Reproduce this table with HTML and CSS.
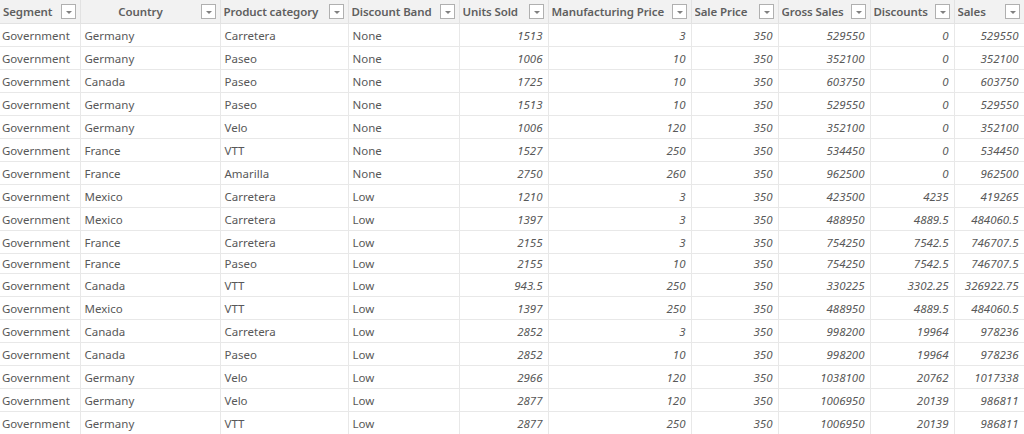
FILE: index.html
```html
<!DOCTYPE html>
<html>
<head>
<meta charset="utf-8">
<link rel="stylesheet" href="styles.css">
</head>
<body>
<table class="grid">
<colgroup>
<col class="c1"><col class="c2"><col class="c3"><col class="c4"><col class="c5"><col class="c6"><col class="c7"><col class="c8"><col class="c9"><col class="c10">
</colgroup>
<thead>
<tr>
<th><div class="hd"><span class="lbl">Segment</span><span class="flt"></span></div></th>
<th><div class="hd"><span class="lbl center">Country</span><span class="flt"></span></div></th>
<th><div class="hd"><span class="lbl">Product category</span><span class="flt"></span></div></th>
<th><div class="hd"><span class="lbl">Discount Band</span><span class="flt"></span></div></th>
<th><div class="hd"><span class="lbl">Units Sold</span><span class="flt"></span></div></th>
<th><div class="hd"><span class="lbl">Manufacturing Price</span><span class="flt"></span></div></th>
<th><div class="hd"><span class="lbl">Sale Price</span><span class="flt"></span></div></th>
<th><div class="hd"><span class="lbl">Gross Sales</span><span class="flt"></span></div></th>
<th><div class="hd"><span class="lbl">Discounts</span><span class="flt"></span></div></th>
<th><div class="hd"><span class="lbl">Sales</span><span class="flt"></span></div></th>
</tr>
</thead>
<tbody>
<tr><td>Government</td><td>Germany</td><td>Carretera</td><td>None</td><td class="n">1513</td><td class="n">3</td><td class="n">350</td><td class="n">529550</td><td class="n">0</td><td class="n">529550</td></tr>
<tr><td>Government</td><td>Germany</td><td>Paseo</td><td>None</td><td class="n">1006</td><td class="n">10</td><td class="n">350</td><td class="n">352100</td><td class="n">0</td><td class="n">352100</td></tr>
<tr><td>Government</td><td>Canada</td><td>Paseo</td><td>None</td><td class="n">1725</td><td class="n">10</td><td class="n">350</td><td class="n">603750</td><td class="n">0</td><td class="n">603750</td></tr>
<tr><td>Government</td><td>Germany</td><td>Paseo</td><td>None</td><td class="n">1513</td><td class="n">10</td><td class="n">350</td><td class="n">529550</td><td class="n">0</td><td class="n">529550</td></tr>
<tr><td>Government</td><td>Germany</td><td>Velo</td><td>None</td><td class="n">1006</td><td class="n">120</td><td class="n">350</td><td class="n">352100</td><td class="n">0</td><td class="n">352100</td></tr>
<tr><td>Government</td><td>France</td><td>VTT</td><td>None</td><td class="n">1527</td><td class="n">250</td><td class="n">350</td><td class="n">534450</td><td class="n">0</td><td class="n">534450</td></tr>
<tr><td>Government</td><td>France</td><td>Amarilla</td><td>None</td><td class="n">2750</td><td class="n">260</td><td class="n">350</td><td class="n">962500</td><td class="n">0</td><td class="n">962500</td></tr>
<tr><td>Government</td><td>Mexico</td><td>Carretera</td><td>Low</td><td class="n">1210</td><td class="n">3</td><td class="n">350</td><td class="n">423500</td><td class="n">4235</td><td class="n">419265</td></tr>
<tr><td>Government</td><td>Mexico</td><td>Carretera</td><td>Low</td><td class="n">1397</td><td class="n">3</td><td class="n">350</td><td class="n">488950</td><td class="n">4889.5</td><td class="n">484060.5</td></tr>
<tr><td>Government</td><td>France</td><td>Carretera</td><td>Low</td><td class="n">2155</td><td class="n">3</td><td class="n">350</td><td class="n">754250</td><td class="n">7542.5</td><td class="n">746707.5</td></tr>
<tr class="short"><td>Government</td><td>France</td><td>Paseo</td><td>Low</td><td class="n">2155</td><td class="n">10</td><td class="n">350</td><td class="n">754250</td><td class="n">7542.5</td><td class="n">746707.5</td></tr>
<tr><td>Government</td><td>Canada</td><td>VTT</td><td>Low</td><td class="n">943.5</td><td class="n">250</td><td class="n">350</td><td class="n">330225</td><td class="n">3302.25</td><td class="n">326922.75</td></tr>
<tr><td>Government</td><td>Mexico</td><td>VTT</td><td>Low</td><td class="n">1397</td><td class="n">250</td><td class="n">350</td><td class="n">488950</td><td class="n">4889.5</td><td class="n">484060.5</td></tr>
<tr><td>Government</td><td>Canada</td><td>Carretera</td><td>Low</td><td class="n">2852</td><td class="n">3</td><td class="n">350</td><td class="n">998200</td><td class="n">19964</td><td class="n">978236</td></tr>
<tr><td>Government</td><td>Canada</td><td>Paseo</td><td>Low</td><td class="n">2852</td><td class="n">10</td><td class="n">350</td><td class="n">998200</td><td class="n">19964</td><td class="n">978236</td></tr>
<tr><td>Government</td><td>Germany</td><td>Velo</td><td>Low</td><td class="n">2966</td><td class="n">120</td><td class="n">350</td><td class="n">1038100</td><td class="n">20762</td><td class="n">1017338</td></tr>
<tr><td>Government</td><td>Germany</td><td>Velo</td><td>Low</td><td class="n">2877</td><td class="n">120</td><td class="n">350</td><td class="n">1006950</td><td class="n">20139</td><td class="n">986811</td></tr>
<tr><td>Government</td><td>Germany</td><td>VTT</td><td>Low</td><td class="n">2877</td><td class="n">250</td><td class="n">350</td><td class="n">1006950</td><td class="n">20139</td><td class="n">986811</td></tr>
</tbody>
</table>
</body>
</html>
```
FILE: styles.css
```css
html, body {
  margin: 0;
  padding: 0;
  background: #ffffff;
  overflow: hidden;
}
.grid {
  border-collapse: collapse;
  table-layout: fixed;
  width: 1024px;
  font-family: "Noto Sans", "Open Sans", sans-serif;
  font-size: 11.5px;
  color: #585858;
}
.c1 { width: 80px; }
.c2 { width: 140px; }
.c3 { width: 128px; }
.c4 { width: 111px; }
.c5 { width: 89px; }
.c6 { width: 143px; }
.c7 { width: 87px; }
.c8 { width: 92px; }
.c9 { width: 84px; }
.c10 { width: 70px; }
.grid th {
  background: #f2f2f2;
  height: 23px;
  padding: 0;
  border-right: 1px solid #e2e2e2;
  border-bottom: 1px solid #e2e2e2;
  font-weight: 600;
  font-size: 11.5px;
  letter-spacing: -0.1px;
  color: #5f5f5f;
  text-align: left;
}
.hd {
  display: flex;
  align-items: center;
  padding: 0 4px 0 3px;
  gap: 3px;
}
.lbl {
  flex: 1;
  white-space: nowrap;
  overflow: hidden;
}
.lbl.center { text-align: center; }
.flt {
  width: 13px;
  height: 13px;
  border: 1px solid #b0b0b0;
  background: #ffffff;
  position: relative;
  flex: none;
}
.flt::after {
  content: "";
  position: absolute;
  left: 4px;
  top: 6px;
  border-left: 3px solid transparent;
  border-right: 3px solid transparent;
  border-top: 3px solid #808080;
}
.grid td {
  height: 22px;
  padding: 0 6px 0 4px;
  border-right: 1px solid #e8e8e8;
  border-bottom: 1px solid #e8e8e8;
  white-space: nowrap;
  overflow: hidden;
}
.grid td:first-child { padding-left: 2px; }
.grid td.n {
  text-align: right;
  font-style: italic;
  padding-right: 5px;
}
.grid tr.short td { height: 19px; }
```
